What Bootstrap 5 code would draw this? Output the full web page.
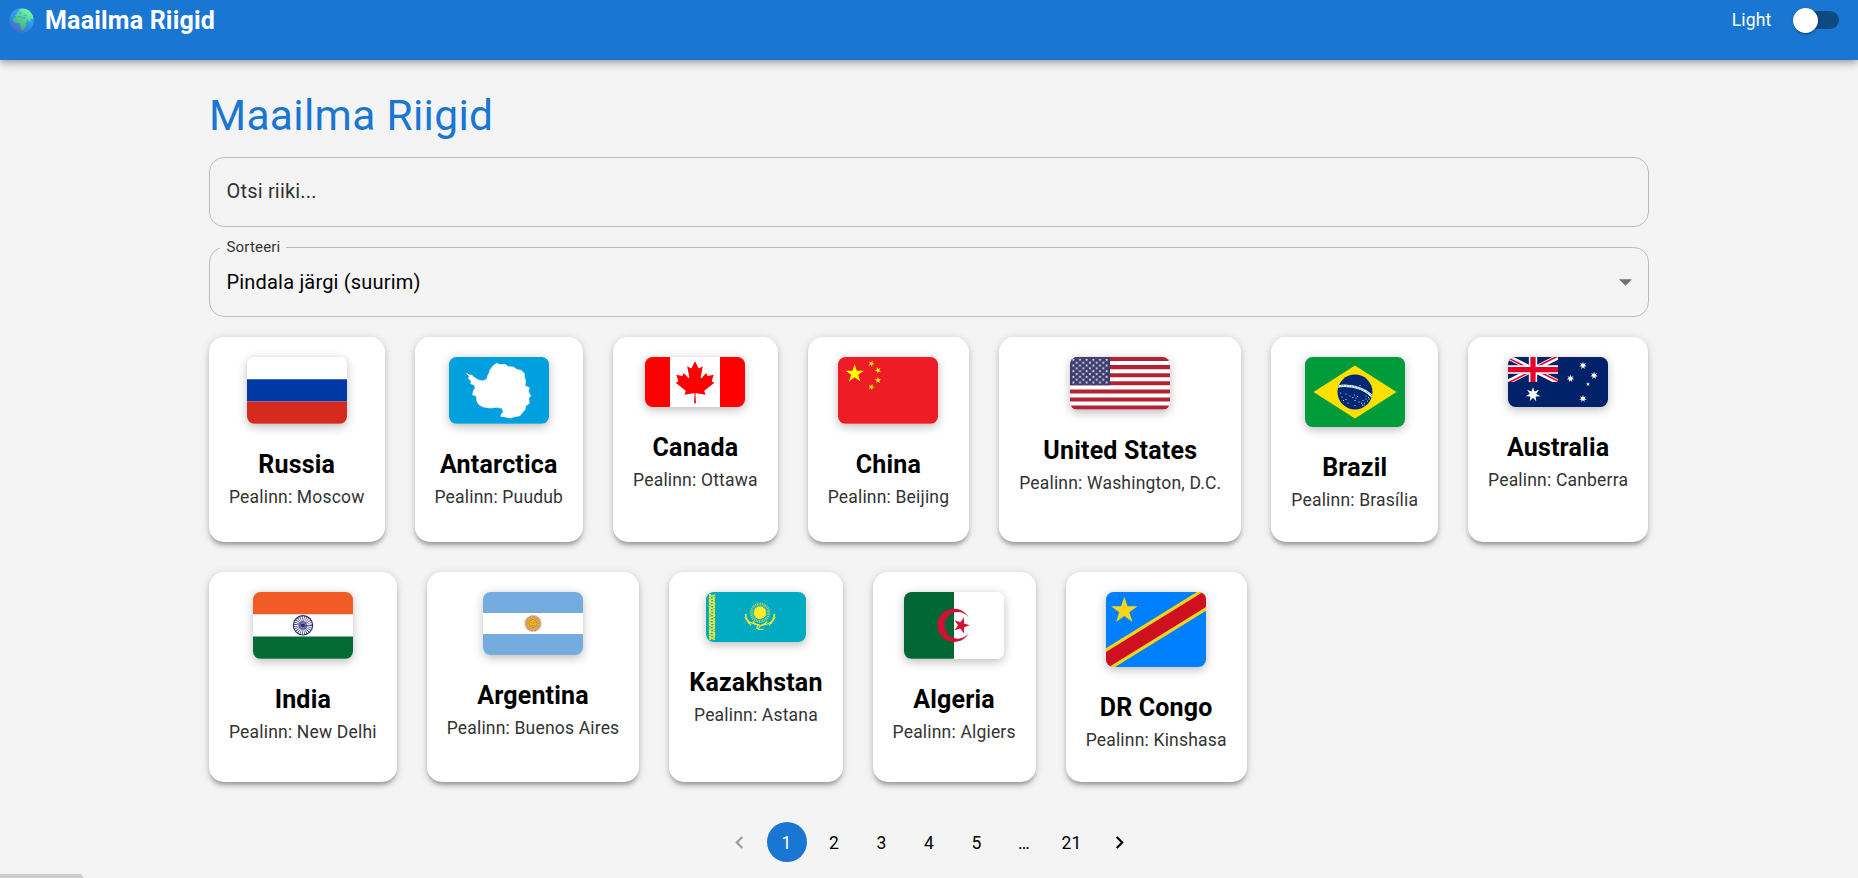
<!DOCTYPE html>
<html lang="et">
<head>
<meta charset="utf-8">
<meta name="viewport" content="width=device-width, initial-scale=1">
<title>Maailma Riigid</title>
<link href="https://cdn.jsdelivr.net/npm/bootstrap@5.3.0/dist/css/bootstrap.min.css" rel="stylesheet">
<style>
  body { background: #f4f4f4; color: #000; font-family: Roboto, "Liberation Sans", sans-serif; font-size: 20px; line-height: 1.5; height: 878px; overflow: hidden; }
  .topbar { height: 60px; padding: 0 10px; background: #1976d2; color: #fff; box-shadow: 0 2.5px 5px -1.25px rgba(0,0,0,.2), 0 5px 6.25px rgba(0,0,0,.14), 0 1.25px 12.5px rgba(0,0,0,.12); }
  .brand { height: 40px; font-size: 25px; font-weight: 700; line-height: 40px; letter-spacing: .0075em; gap: 11px; }
  .brand span { padding-top: 2px; }
  .brand svg { width: 25px; height: 25px; margin-left: -1px; }
  .mode { height: 40px; font-size: 17.5px; letter-spacing: .01071em; }
  .toggle { width: 42.5px; height: 17.5px; border-radius: 9px; background: #0f4981; margin: 0 9px 0 25px; }
  .toggle .knob { width: 25px; height: 25px; margin-left: -3.7px; flex: none; border-radius: 50%; background: #fff; box-shadow: 0 2.5px 1.25px -1.25px rgba(0,0,0,.2), 0 1.25px 1.25px rgba(0,0,0,.14), 0 1.25px 3.75px rgba(0,0,0,.12); }
  .page { width: 1440px; padding-top: 30px; }
  .page h1 { font-size: 42.5px; font-weight: 400; line-height: 1.235; letter-spacing: .00735em; color: #1976d2; margin: 0 0 14.5px; }
  .field { height: 70px; padding: 0 16.5px; margin-bottom: 20px; border: 1px solid #bbb; border-radius: 15px; font-size: 20px; letter-spacing: .00938em; }
  .field input { color: #333; margin-bottom: 2px; letter-spacing: inherit; }
  .field input::placeholder { color: #333; opacity: 1; }
  .field .legend-label { left: 10px; top: -12px; padding: 0 6px 0 6.5px; background: #f4f4f4; color: #333; font-size: 15px; line-height: 22px; }
  .field .caret { width: 13px; height: 7px; fill: #6f6f6f; margin-top: 1px; }
  .countries { gap: 30px 29.96px; }
  .country { padding: 20px 20px 29px; background: #fff; border-radius: 15px; box-shadow: 0 3.75px 3.75px -2.5px rgba(0,0,0,.2), 0 3.75px 5px rgba(0,0,0,.14), 0 1.25px 10px rgba(0,0,0,.12); }
  .flag { display: block; width: 100px; border-radius: 7.5px; box-shadow: 0 2.5px 10px rgba(0,0,0,.25); margin-bottom: 21px; }
  .country h2 { font-size: 25px; font-weight: 700; line-height: 40px; letter-spacing: .0075em; margin: 0; }
  .country p { font-size: 17.5px; line-height: 25px; letter-spacing: .01071em; color: #333; margin: 0; }
  .pager { margin-top: 40px; gap: 7.5px; font-size: 17.5px; letter-spacing: .01071em; }
  .pager a { width: 40px; height: 40px; padding-top: 2px; border-radius: 50%; color: #000; text-decoration: none; }
  .pager a.current { background: #1976d2; color: #fff; }
  .pager svg { width: 25px; height: 25px; }
  .status { left: 0; bottom: 0; width: 83px; height: 4px; background: #cdcdcd; border-top-right-radius: 5px; }
</style>
</head>
<body>
<svg width="0" height="0" class="position-absolute" aria-hidden="true">
  <defs>
    <polygon id="star5" points="0,-1 .2245,-.309 .951,-.309 .363,.118 .588,.809 0,.382 -.588,.809 -.363,.118 -.951,-.309 -.2245,-.309"/>
    <polygon id="star7" points="0,-1 .193,-.4 .782,-.623 .433,-.099 .975,.223 .347,.277 .434,.901 0,.444 -.434,.901 -.347,.277 -.975,.223 -.433,-.099 -.782,-.623 -.193,-.4"/>
  </defs>
</svg>

<header class="topbar d-flex justify-content-between align-items-start">
  <div class="brand d-flex align-items-center">
    <svg viewBox="0 0 25 25">
      <defs>
        <linearGradient id="sea" x1="0.8" y1="0" x2="0.2" y2="1"><stop offset="0" stop-color="#35c0f5"/><stop offset=".5" stop-color="#2f96e6"/><stop offset="1" stop-color="#4a62c8"/></linearGradient>
        <linearGradient id="land" x1="0.9" y1="0" x2="0.3" y2="1"><stop offset="0" stop-color="#7dffb0"/><stop offset="1" stop-color="#3fa878"/></linearGradient>
        <clipPath id="globe"><circle cx="12.5" cy="12.5" r="12.2"/></clipPath>
      </defs>
      <circle cx="12.5" cy="12.5" r="12.2" fill="url(#sea)"/>
      <path clip-path="url(#globe)" fill="url(#land)" d="M6 7.5 8 6.5 8.500 4.500 10.500 4 10 2 13 .5 19 1 24 6 24.500 11.500 22.500 10 21.500 12 20.500 14.500 18.500 11.500 17.200 11 18 13 16.800 15 17 17.500 15.500 20 13.500 22.200 12 21.500 11.300 18 10.600 15.200 6 14.800 4.200 12.500 5 10 7.500 9Z"/>
      <path fill="none" stroke="#2e9be3" stroke-width=".9" d="M8.300 9 11 8.300 13 10 16.500 9.800M11 6.500l1-2.500M14.500 7.800l3-.4"/>
    </svg>
    <span>Maailma Riigid</span>
  </div>
  <div class="mode d-flex align-items-center">
    <span>Light</span>
    <div class="toggle d-flex align-items-center"><span class="knob"></span></div>
  </div>
</header>

<main class="page mx-auto">
  <h1>Maailma Riigid</h1>
  <div class="field d-flex align-items-center">
    <input class="form-control-plaintext p-0 border-0" type="text" placeholder="Otsi riiki...">
  </div>
  <div class="field d-flex align-items-center justify-content-between position-relative">
    <span class="legend-label position-absolute">Sorteeri</span>
    <span>Pindala järgi (suurim)</span>
    <svg class="caret" viewBox="0 0 13 7"><path d="M0 .2h13L6.500 6.700z"/></svg>
  </div>

  <div class="countries d-flex flex-wrap">
    <article class="country d-flex flex-column align-items-center">
      <svg class="flag" viewBox="0 0 300 200"><path fill="#fff" d="M0 0h300v67H0z"/><path fill="#0039a6" d="M0 66.700h300v67H0z"/><path fill="#d52b1e" d="M0 133.300h300V200H0z"/></svg>
      <h2>Russia</h2><p>Pealinn: Moscow</p>
    </article>
    <article class="country d-flex flex-column align-items-center">
      <svg class="flag" viewBox="747 96 300 200"><path fill="#009fdd" d="M747 96h300v200H747z"/><path fill="#fff" stroke="#fff" stroke-width="2" d="M800 145 808 150 815 150 822 157 835 165 848 168 860 163 864 150 867 145 870 135 880 122 890 115 900 119 915 118 925 125 940 126 950 133 965 137 973 146 973 157 977 167 975 182 988 188 985 200 992 212 986 220 988 235 977 243 975 254 968 262 960 272 945 275 930 279 912 275 902 274 905 266 910 262 907 250 890 247 870 249 850 246 838 240 831 230 830 220 828 212 818 210 820 198 826 188 822 179 812 176 814 168 805 160 808 155Z"/></svg>
      <h2>Antarctica</h2><p>Pealinn: Puudub</p>
    </article>
    <article class="country d-flex flex-column align-items-center">
      <svg class="flag" viewBox="0 0 9600 4800"><path fill="#f00" d="M0 0h9600v4800H0z"/><path fill="#fff" d="M2400 0h4800v4800H2400z"/><path fill="#f00" d="m4890 4430-45-863a95 95 0 0 1 111-98l859 151-116-320a65 65 0 0 1 20-73l941-762-212-99a65 65 0 0 1-34-79l186-572-542 115a65 65 0 0 1-73-38l-105-247-423 454a65 65 0 0 1-111-57l204-1052-327 189a65 65 0 0 1-91-27l-332-652-332 652a65 65 0 0 1-91 27l-327-189 204 1052a65 65 0 0 1-111 57l-423-454-105 247a65 65 0 0 1-73 38l-542-115 186 572a65 65 0 0 1-34 79l-212 99 941 762a65 65 0 0 1 20 73l-116 320 859-151a95 95 0 0 1 111 98l-45 863z"/></svg>
      <h2>Canada</h2><p>Pealinn: Ottawa</p>
    </article>
    <article class="country d-flex flex-column align-items-center">
      <svg class="flag" viewBox="0 0 300 200"><path fill="#ee1c25" d="M0 0h300v200H0z"/><g fill="#ff0"><use href="#star5" transform="translate(50 50) scale(29)"/><use href="#star5" transform="translate(100 20) rotate(23) scale(10)"/><use href="#star5" transform="translate(120 40) rotate(46) scale(10)"/><use href="#star5" transform="translate(120 70) rotate(70) scale(10)"/><use href="#star5" transform="translate(100 90) rotate(21) scale(10)"/></g></svg>
      <h2>China</h2><p>Pealinn: Beijing</p>
    </article>
    <article class="country d-flex flex-column align-items-center">
      <svg class="flag" viewBox="0 0 1900 1000">
        <defs><pattern id="stars" width="126.700" height="107.700" patternUnits="userSpaceOnUse"><g fill="#fff"><use href="#star5" transform="translate(63.300 53.800) scale(31)"/><use href="#star5" transform="scale(31)"/><use href="#star5" transform="translate(126.700 0) scale(31)"/><use href="#star5" transform="translate(0 107.700) scale(31)"/><use href="#star5" transform="translate(126.700 107.700) scale(31)"/></g></pattern></defs>
        <path fill="#fff" d="M0 0h1900v1000H0z"/><path stroke="#b22234" stroke-width="76.900" d="M0 38.500h1900M0 192.300h1900M0 346.200h1900M0 500h1900M0 653.800h1900M0 807.700h1900M0 961.500h1900"/><path fill="#3c3b6e" d="M0 0h760v538.500H0z"/><path fill="url(#stars)" d="M30 22h700v494H30z"/></svg>
      <h2>United States</h2><p>Pealinn: Washington, D.C.</p>
    </article>
    <article class="country d-flex flex-column align-items-center">
      <svg class="flag" viewBox="0 0 100 70">
        <defs><clipPath id="sky"><circle cx="50" cy="35" r="17.500"/></clipPath></defs>
        <path fill="#009b3a" d="M0 0h100v70H0z"/><path fill="#fedf00" d="M8.500 35 50 8.500 91.500 35 50 61.500z"/><circle cx="50" cy="35" r="17.500" fill="#002776"/>
        <g clip-path="url(#sky)" fill="none"><circle cx="40" cy="70" r="41.250" stroke="#fff" stroke-width="2.500"/><circle cx="40" cy="70" r="41.250" stroke="#5fae83" stroke-width="1.200" stroke-dasharray=".9 .7"/></g>
        <path fill="none" stroke="#fff" stroke-width="1.150" stroke-linecap="round" d="M55 28.500h0M35.500 36h0M37 40h0M38.500 43.500h0M41 42.500h0M43 46h0M41 37h0M45 39h0M49.500 38h0M47.800 40.500h0M51 41h0M50 43.500h0M52.500 39.500h0M50 48.500h0M54 45h0M56.500 46h0M58 43.500h0M59.500 46h0M61 42h0M62.500 44h0M63.500 40.500h0M57.500 48h0M61 39h0M64 42h0M59 48h0"/></svg>
      <h2>Brazil</h2><p>Pealinn: Brasília</p>
    </article>
    <article class="country d-flex flex-column align-items-center">
      <svg class="flag" viewBox="0 0 120 60">
        <defs><clipPath id="canton"><path d="M0 0h60v30H0z"/></clipPath><clipPath id="saltire"><path d="M30 15h30v15zv15H0zH0V0zV0h30z"/></clipPath></defs>
        <path fill="#012169" d="M0 0h120v60H0z"/>
        <g clip-path="url(#canton)"><path stroke="#fff" stroke-width="6" d="m0 0 60 30M60 0 0 30"/><path clip-path="url(#saltire)" stroke="#e4002b" stroke-width="4" d="m0 0 60 30M60 0 0 30"/><path stroke="#fff" stroke-width="10" d="M30 0v30M0 15h60"/><path stroke="#e4002b" stroke-width="6.300" d="M30 0v30M0 15h60"/></g>
        <g fill="#fff"><use href="#star7" transform="translate(30 45) scale(9)"/><use href="#star7" transform="translate(90 50) scale(4.600)"/><use href="#star7" transform="translate(75 25.800) scale(4.600)"/><use href="#star7" transform="translate(90 10.200) scale(4.600)"/><use href="#star7" transform="translate(103.300 22.200) scale(4.600)"/><use href="#star5" transform="translate(96 32.500) scale(2.700)"/></g></svg>
      <h2>Australia</h2><p>Pealinn: Canberra</p>
    </article>

    <article class="country d-flex flex-column align-items-center">
      <svg class="flag" viewBox="0 0 300 200"><path fill="#fff" d="M0 0h300v200H0z"/><path fill="#f15b25" d="M0 0h300v66.700H0z"/><path fill="#046a35" d="M0 133.300h300V200H0z"/><g fill="none" stroke="#2b2b78"><circle cx="150" cy="100" r="29" stroke-width="3.600"/><circle cx="150" cy="100" r="17" stroke-width="22" stroke-dasharray="1.500 2.950"/><circle cx="150" cy="100" r="10" stroke-width="6" stroke-dasharray="1.600 1"/></g><circle cx="150" cy="100" r="6.500" fill="#2b2b78"/></svg>
      <h2>India</h2><p>Pealinn: New Delhi</p>
    </article>
    <article class="country d-flex flex-column align-items-center">
      <svg class="flag" viewBox="0 0 800 504"><path fill="#74acdf" d="M0 0h800v504H0z"/><path fill="#fff" d="M0 168h800v168H0z"/><g fill="none"><circle cx="400" cy="252" r="48" stroke="#dfb275" stroke-width="40"/><circle cx="400" cy="252" r="55" stroke="#b57a40" stroke-width="30" stroke-dasharray="3.500 7.300"/><circle cx="400" cy="252" r="67" stroke="#fff" stroke-width="9" stroke-dasharray="5 5.800"/></g><circle cx="400" cy="252" r="32" fill="#f6b40e" stroke="#b0701a" stroke-width="5"/><path fill="none" stroke="#b87b16" stroke-width="5" d="M382 244h12m12 0h12M400 248v9M388 267q12 7 24 0"/></svg>
      <h2>Argentina</h2><p>Pealinn: Buenos Aires</p>
    </article>
    <article class="country d-flex flex-column align-items-center">
      <svg class="flag" viewBox="0 0 300 150"><path fill="#00abc2" d="M0 0h300v150H0z"/><g fill="none" stroke="#ffec2d"><path stroke-width="5" stroke-dasharray="5 2" d="M11.500 6v138M24.500 8v136"/><path stroke-width="3.200" d="m10 8 16 9-16 9 16 9-16 9 16 9-16 9 16 9-16 9 16 9-16 9 16 9-16 9 16 9-16 9 16 9"/><path stroke-width="2.600" d="m26 8-16 9 16 9-16 9 16 9-16 9 16 9-16 9 16 9-16 9 16 9-16 9 16 9-16 9 16 9-16 9"/><circle cx="162" cy="62" r="26" stroke-width="9" stroke-dasharray="2.600 2.500" opacity=".75"/><path stroke-width="5" stroke-dasharray="10 1.500" d="M119 66q1 20 16 33M205 66q-1 20-16 33"/><path stroke-width="3.200" d="M116 76q16 22 44 22q-8 4-8 10q6 6 20 4M208 76q-14 22-36 23q-10 1-14 9M140 88q10 12 22 12M184 88q-8 10-20 12"/></g><circle cx="162" cy="62" r="19" fill="#ffec2d"/></svg>
      <h2>Kazakhstan</h2><p>Pealinn: Astana</p>
    </article>
    <article class="country d-flex flex-column align-items-center">
      <svg class="flag" viewBox="0 0 300 200"><path fill="#fff" d="M0 0h300v200H0z"/><path fill="#006633" d="M0 0h150v200H0z"/><path fill="#d21034" d="M195 78A50 50 0 1 0 195 122A40 40 0 1 1 195 78Z"/><use href="#star5" fill="#d21034" transform="translate(172 100) rotate(90) scale(25.500)"/></svg>
      <h2>Algeria</h2><p>Pealinn: Algiers</p>
    </article>
    <article class="country d-flex flex-column align-items-center">
      <svg class="flag" viewBox="0 0 100 75"><path fill="#007fff" d="M0 0h100v75H0z"/><path fill="#f7d618" d="M0 56.200 91 0h9v18.800L9 75H0z"/><path fill="#ce1021" d="M0 60 97 0h3v15L3 75H0z"/><use href="#star5" fill="#f7d618" transform="translate(18.300 18.700) scale(14)"/></svg>
      <h2>DR Congo</h2><p>Pealinn: Kinshasa</p>
    </article>
  </div>

  <nav class="pager d-flex justify-content-center">
    <a class="d-flex align-items-center justify-content-center" href="#" aria-label="Eelmine"><svg viewBox="0 0 24 24" fill="#9b9b9b"><path d="M15.410 7.410 14 6l-6 6 6 6 1.410-1.410L10.830 12z"/></svg></a>
    <a class="current d-flex align-items-center justify-content-center" href="#">1</a>
    <a class="d-flex align-items-center justify-content-center" href="#">2</a>
    <a class="d-flex align-items-center justify-content-center" href="#">3</a>
    <a class="d-flex align-items-center justify-content-center" href="#">4</a>
    <a class="d-flex align-items-center justify-content-center" href="#">5</a>
    <a class="d-flex align-items-center justify-content-center" href="#">…</a>
    <a class="d-flex align-items-center justify-content-center" href="#">21</a>
    <a class="d-flex align-items-center justify-content-center" href="#" aria-label="Järgmine"><svg viewBox="0 0 24 24"><path d="M10 6 8.590 7.410 13.170 12l-4.580 4.590L10 18l6-6z"/></svg></a>
  </nav>
</main>
<div class="status position-fixed"></div>
<script src="https://cdn.jsdelivr.net/npm/bootstrap@5.3.0/dist/js/bootstrap.bundle.min.js"></script>
</body>
</html>
